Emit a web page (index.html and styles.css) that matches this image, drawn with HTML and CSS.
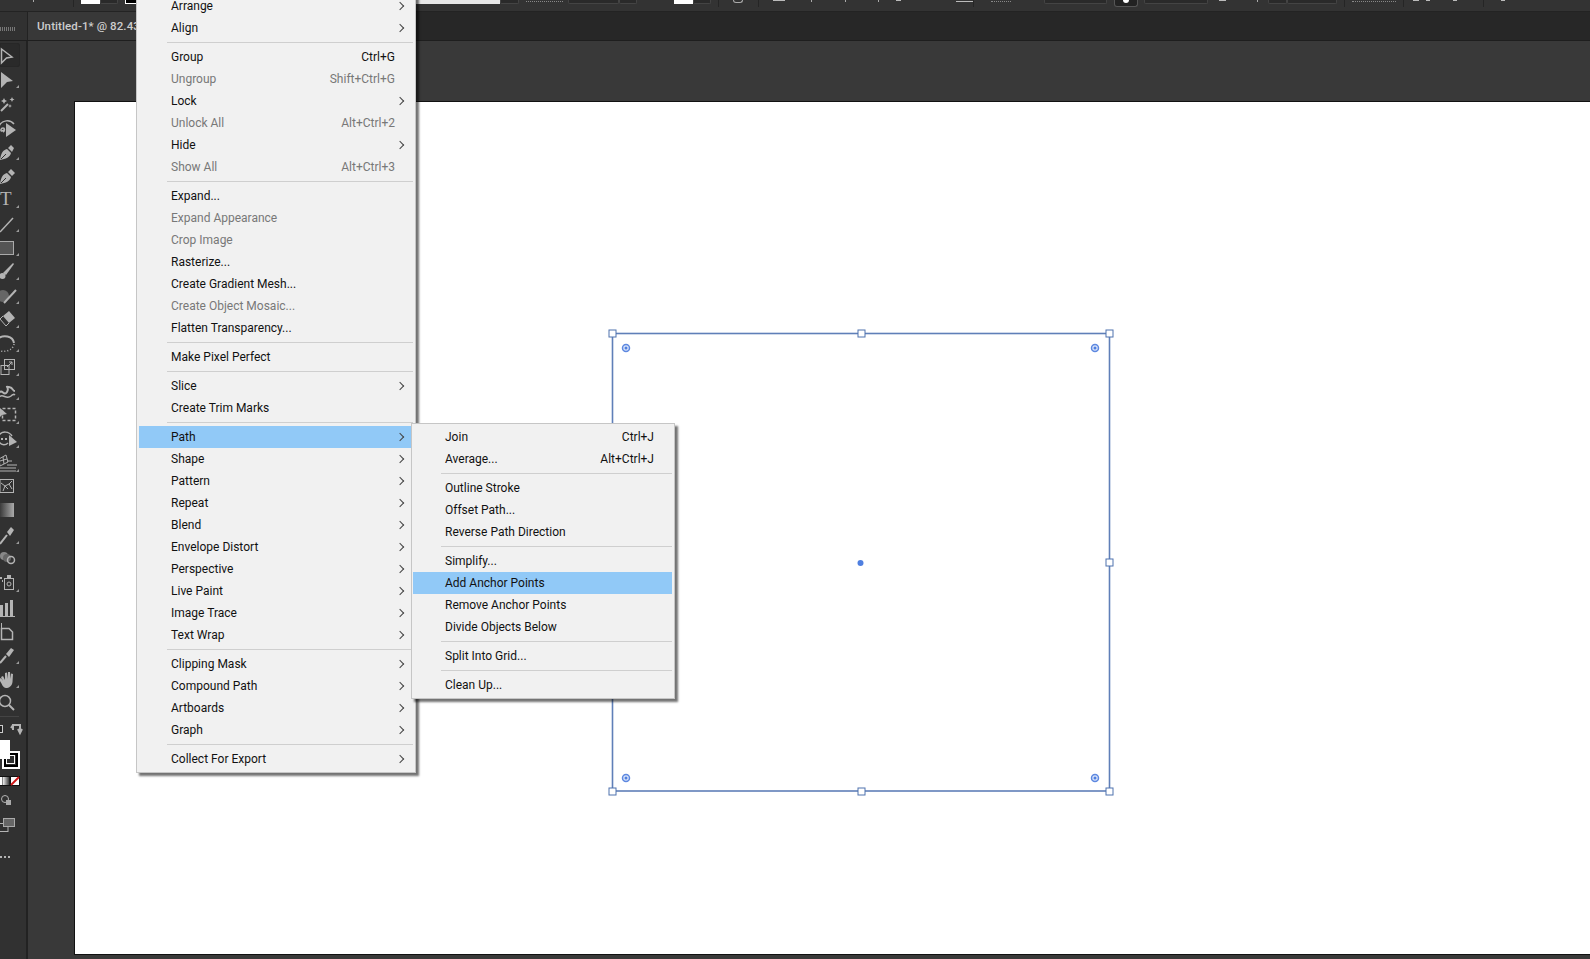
FILE: index.html
```html
<!DOCTYPE html>
<html lang="en">
<head>
  <meta charset="UTF-8">
  <title>Untitled-1* @ 82.43%</title>
  <link rel="stylesheet" href="styles.css">
</head>
<body>

  <!-- Control bar, only its lower edge is on screen -->
  <div class="control-bar">
    <i class="tick m33"></i><i class="sep m39"></i>
    <i class="white m7 w19"></i><i class="dd w18"></i>
    <i class="stroke-box m7 w13"></i>
    <i class="light m277 w85"></i><i class="dd w19"></i>
    <i class="dots m7 w37"></i>
    <i class="dd m5 w51"></i><i class="dd w18"></i>
    <i class="white m37 w19"></i><i class="dd w18"></i>
    <i class="sep m7"></i>
    <i class="knob m14"></i>
    <i class="sep m15"></i>
    <i class="bar m14 w12"></i>
    <i class="tick m26"></i><i class="tick m33"></i><i class="tick m32"></i>
    <i class="bar m17 w5"></i>
    <i class="line m55 w17"></i>
    <i class="sep"></i>
    <i class="dots m17 w20"></i>
    <i class="dd m33 w63"></i>
    <i class="toggle m7 w24"></i>
    <i class="dd m6 w64"></i>
    <i class="bar m11 w7"></i>
    <i class="tick m31"></i>
    <i class="dd m10 w19"></i><i class="dd w50"></i>
    <i class="sep m7"></i>
    <i class="dots m7 w44"></i>
    <i class="sep m7"></i>
    <i class="bar m9 w6"></i><i class="bar m7 w4"></i><i class="bar m23 w4"></i>
    <i class="sep m26"></i>
    <i class="bar m17 w4"></i>
  </div>

  <div class="tab-bar">
    <div class="gripper-cell"><i class="gripper"></i></div>
    <div class="doc-tab"><span class="doc-name">Untitled-1* @ 82.43</span></div>
  </div>

  <div class="workspace">

    <!-- Tools -->
    <div class="toolbar">
      <div class="tool selected"><svg viewBox="0 0 28 24"><path class="ln w15" d="M1.500 6 12 14 6.500 15 1.500 20Z"/></svg></div>
      <div class="tool"><svg viewBox="0 0 28 24"><path class="fl" d="M1 5 13 14 7 15 1 21Z"/><path class="fly" d="M19 18v3h-3Z"/></svg></div>
      <div class="tool"><svg viewBox="0 0 28 24"><path class="ln w2" d="M1 20 8 13"/><path class="fl" d="M4 7l1 2 2 1-2 1-1 2-1-2-2-1 2-1ZM12 6l.8 1.700 1.700.8-1.700.8-.8 1.700-.8-1.700-1.700-.8 1.700-.8ZM10 13l.6 1.400 1.400.6-1.400.6-.6 1.400-.6-1.400-1.400-.6 1.400-.6Z"/></svg></div>
      <div class="tool"><svg viewBox="0 0 28 24"><path class="ln w15" d="M-1 11C2 5 10 4 14 9"/><path class="fl" d="M6 8 16 15 6 22Z"/><path class="ln w15" d="M3 17c2-1 2-4 0-4s-3 3-1 3l2-1"/></svg></div>
      <div class="tool"><svg viewBox="0 0 28 24"><path class="fl" d="M0 21C1 14 3 11 7 10L11 14C10 18 6 20 0 21ZM8 9 11 6 14 9 12 13Z"/><path class="dk" d="M1 20 6 15"/><path class="fly" d="M19 18v3h-3Z"/></svg></div>
      <div class="tool"><svg viewBox="0 0 28 24"><path class="fl" d="M0 21C1 14 3 11 7 10L11 14C10 18 6 20 0 21ZM8 9 11 6 15 10 12 13Z"/><path class="dk" d="M1 20 6 15"/></svg></div>
      <div class="tool"><svg viewBox="0 0 28 24"><text class="type-glyph" x="0" y="18">T</text><path class="fly" d="M19 18v3h-3Z"/></svg></div>
      <div class="tool"><svg viewBox="0 0 28 24"><path class="ln w15" d="M0 21 13 7"/><path class="fly" d="M19 18v3h-3Z"/></svg></div>
      <div class="tool"><svg viewBox="0 0 28 24"><rect x="-2" y="6.500" width="15.500" height="13" fill="#555" stroke="#aaa"/><path class="fly" d="M19 18v3h-3Z"/></svg></div>
      <div class="tool"><svg viewBox="0 0 28 24"><path class="fl" d="M13 4 14 5 6 16 3 14Z"/><circle class="fl" cx="2.500" cy="17" r="3"/><path class="fly" d="M19 18v3h-3Z"/></svg></div>
      <div class="tool"><svg viewBox="0 0 28 24"><circle cx="3" cy="13" r="6" fill="#666"/><path class="ln w2" d="M4 20 16 7"/><path class="fly" d="M19 18v3h-3Z"/></svg></div>
      <div class="tool"><svg viewBox="0 0 28 24"><path class="fl" d="M9 4 15 11 9 16 3 9Z"/><path class="ln" d="M3 9 0 12 6 19 9 16"/><path class="fly" d="M19 18v3h-3Z"/></svg></div>
      <div class="tool"><svg viewBox="0 0 28 24"><path class="ln w2" d="M-2 8C3 3 13 5 14 12"/><path class="ln dotted w15" d="M14 13C13 20 3 22-2 19"/><path class="fly" d="M19 18v3h-3Z"/></svg></div>
      <div class="tool"><svg viewBox="0 0 28 24"><rect class="ln" x="1" y="10.500" width="8" height="9"/><rect class="ln" x="4.500" y="4.500" width="10" height="10"/><path class="ln" d="M7 12 12 7M9 7h3v3"/><path class="fly" d="M19 18v3h-3Z"/></svg></div>
      <div class="tool"><svg viewBox="0 0 28 24"><path class="ln w2" d="M-1 14C2 9 4 18 7 13S4 7 9 8 12 12 15 12"/><path class="ln w15" d="M-1 18C3 14 6 21 11 17 13 15 14 15 15 16"/><path class="fly" d="M19 18v3h-3Z"/></svg></div>
      <div class="tool"><svg viewBox="0 0 28 24"><rect class="ln dashed w15" x="2.500" y="5.500" width="13" height="12"/><path class="fl" d="M0 5 7 11 2 12 0 14Z"/><path class="fly" d="M19 18v3h-3Z"/></svg></div>
      <div class="tool"><svg viewBox="0 0 28 24"><path class="ln w15" d="M-1 8C2 4 9 4 12 9"/><path class="ln w15" d="M-1 15C2 19 6 18 8 16"/><path class="dotrow" d="M1 12h8"/><path class="fl" d="M9 8 17 15 9 19Z"/><path class="fly" d="M19 18v3h-3Z"/></svg></div>
      <div class="tool"><svg viewBox="0 0 28 24"><path class="ln" d="M-1 8 6 4 8 11 0 15ZM3 6 4 13M0 10 7 8"/><path class="ln" d="M7 10h5M7 14h10M0 17h16M0 20h16"/><path class="fly" d="M19 18v3h-3Z"/></svg></div>
      <div class="tool"><svg viewBox="0 0 28 24"><rect class="ln" x="0" y="4.500" width="13.500" height="13"/><path class="ln" d="M1 8 5 11 3 16M5 11 9 9 12 6M9 9 12 14M5 11 8 14"/></svg></div>
      <div class="tool"><svg viewBox="0 0 28 24"><rect x="-1" y="4" width="15" height="14" fill="url(#grad-tool)"/></svg></div>
      <div class="tool"><svg viewBox="0 0 28 24"><path class="ln w2" d="M0 21 7 12"/><path class="fl" d="M7 9 11 4 14 7 10 13Z"/><path class="fly" d="M19 18v3h-3Z"/></svg></div>
      <div class="tool"><svg viewBox="0 0 28 24"><circle cx="4" cy="9" r="4" fill="#888"/><circle cx="7" cy="11" r="4" fill="#666"/><circle class="ln w15" cx="11" cy="13" r="3.500"/></svg></div>
      <div class="tool"><svg viewBox="0 0 28 24"><rect class="ln" x="4.500" y="7.500" width="9" height="11"/><circle class="ln" cx="9" cy="13" r="2"/><rect class="fl" x="7" y="4" width="4" height="3"/><path class="dotrow" d="M0 7h3M2 10h1"/><path class="fly" d="M19 18v3h-3Z"/></svg></div>
      <div class="tool"><svg viewBox="0 0 28 24"><path class="fl" d="M0 10H3V21H0ZM5 8H8V21H5ZM10 5H13V21H10Z"/><path class="fl" d="M-1 21H15V22H-1Z"/></svg></div>
      <div class="tool"><svg viewBox="0 0 28 24"><path class="ln w15" d="M1.500 9.500H9L12.500 13V20.500H1.500Z"/><path class="ln" d="M1.500 4V9"/></svg></div>
      <div class="tool"><svg viewBox="0 0 28 24"><path class="ln w2" d="M0 20 6 13"/><path class="fl" d="M6 11 11 5 14 7 9 14Z"/><path class="fly" d="M19 18v3h-3Z"/></svg></div>
      <div class="tool"><svg viewBox="0 0 28 24"><path class="fl" d="M1 10 3 9 5 13V6L7 5.500 8 12V5L10 5 10.500 12 11 6.500 13 7 12.500 15C12 19 9 21 6 21 3 21 2 17 0 14L-1 12 1 11 3 14Z"/><path class="fly" d="M19 18v3h-3Z"/></svg></div>
      <div class="tool"><svg viewBox="0 0 28 24"><circle class="ln w15" cx="5" cy="10" r="5.500"/><path class="ln w2" d="M9 14 14 19"/></svg></div>
    </div>

    <div class="tool-extras">
      <svg viewBox="0 0 28 150" class="swatches">
        <path d="M0 1.500H19" class="rule"/>
        <rect x="-3" y="10.500" width="5.500" height="7" fill="#222" stroke="#ccc"/>
        <path class="ln w2" d="M13 15V10H20V16M11 13 13 10M22 14 20 18 18 14" />
        <rect x="3" y="37" width="16" height="16" fill="none" stroke="#fff" stroke-width="2"/>
        <rect x="5" y="39" width="12" height="12" fill="none" stroke="#000" stroke-width="2"/>
        <rect x="6.500" y="40.500" width="8" height="8" fill="none" stroke="#fff"/>
        <rect x="-1" y="25" width="11" height="19" fill="#fff"/>
        <rect x="-1" y="61" width="21" height="10" fill="#111"/>
        <rect x="0" y="62" width="2.500" height="8" fill="#fff"/>
        <rect x="3" y="62" width="6.500" height="8" fill="url(#grad-swatch)"/>
        <rect x="11" y="62" width="8" height="8" fill="#fff"/>
        <path d="M11 70 19 62" stroke="#d01818" stroke-width="2"/>
        <circle class="ln" cx="5" cy="84" r="3.500"/>
        <rect x="6" y="85" width="5" height="5" fill="#aaa"/>
        <rect class="ln" x="-2" y="108.500" width="10" height="8"/>
        <rect x="3.500" y="103.500" width="11" height="8" fill="#666" stroke="#aaa"/>
        <path class="dotrow" d="M0 142h12"/>
        <defs>
          <linearGradient id="grad-tool"><stop offset="0" stop-color="#333"/><stop offset="1" stop-color="#aaa"/></linearGradient>
          <linearGradient id="grad-swatch"><stop offset="0" stop-color="#eee"/><stop offset="1" stop-color="#333"/></linearGradient>
        </defs>
      </svg>
    </div>

    <div class="canvas">
      <div class="artboard">
        <svg class="selection" width="520" height="484" viewBox="0 0 520 484">
          <rect class="sel-box" x="12.500" y="13.500" width="497" height="457.500"/>
          <g class="sel-handles">
            <rect x="9" y="10" width="7" height="7"/><rect x="258" y="10" width="7" height="7"/><rect x="506" y="10" width="7" height="7"/>
            <rect x="9" y="239" width="7" height="7"/><rect x="506" y="239" width="7" height="7"/>
            <rect x="9" y="468" width="7" height="7"/><rect x="258" y="468" width="7" height="7"/><rect x="506" y="468" width="7" height="7"/>
          </g>
          <g class="sel-corners">
            <circle cx="26" cy="28" r="3.500"/><circle cx="495" cy="28" r="3.500"/><circle cx="26" cy="458" r="3.500"/><circle cx="495" cy="458" r="3.500"/>
          </g>
          <g class="sel-dots">
            <circle cx="26" cy="28" r="1.500"/><circle cx="495" cy="28" r="1.500"/><circle cx="26" cy="458" r="1.500"/><circle cx="495" cy="458" r="1.500"/>
            <circle cx="260.500" cy="243" r="3"/>
          </g>
        </svg>
      </div>
    </div>
  </div>

  <!-- Object menu -->
  <div class="menu main-menu">
    <div class="item"><span>Arrange</span><b class="arrow"></b></div>
    <div class="item"><span>Align</span><b class="arrow"></b></div>
    <hr>
    <div class="item"><span>Group</span><em>Ctrl+G</em></div>
    <div class="item off"><span>Ungroup</span><em>Shift+Ctrl+G</em></div>
    <div class="item"><span>Lock</span><b class="arrow"></b></div>
    <div class="item off"><span>Unlock All</span><em>Alt+Ctrl+2</em></div>
    <div class="item"><span>Hide</span><b class="arrow"></b></div>
    <div class="item off"><span>Show All</span><em>Alt+Ctrl+3</em></div>
    <hr>
    <div class="item"><span>Expand...</span></div>
    <div class="item off"><span>Expand Appearance</span></div>
    <div class="item off"><span>Crop Image</span></div>
    <div class="item"><span>Rasterize...</span></div>
    <div class="item"><span>Create Gradient Mesh...</span></div>
    <div class="item off"><span>Create Object Mosaic...</span></div>
    <div class="item"><span>Flatten Transparency...</span></div>
    <hr>
    <div class="item"><span>Make Pixel Perfect</span></div>
    <hr>
    <div class="item"><span>Slice</span><b class="arrow"></b></div>
    <div class="item"><span>Create Trim Marks</span></div>
    <hr>
    <div class="item active"><span>Path</span><b class="arrow"></b></div>
    <div class="item"><span>Shape</span><b class="arrow"></b></div>
    <div class="item"><span>Pattern</span><b class="arrow"></b></div>
    <div class="item"><span>Repeat</span><b class="arrow"></b></div>
    <div class="item"><span>Blend</span><b class="arrow"></b></div>
    <div class="item"><span>Envelope Distort</span><b class="arrow"></b></div>
    <div class="item"><span>Perspective</span><b class="arrow"></b></div>
    <div class="item"><span>Live Paint</span><b class="arrow"></b></div>
    <div class="item"><span>Image Trace</span><b class="arrow"></b></div>
    <div class="item"><span>Text Wrap</span><b class="arrow"></b></div>
    <hr>
    <div class="item"><span>Clipping Mask</span><b class="arrow"></b></div>
    <div class="item"><span>Compound Path</span><b class="arrow"></b></div>
    <div class="item"><span>Artboards</span><b class="arrow"></b></div>
    <div class="item"><span>Graph</span><b class="arrow"></b></div>
    <hr>
    <div class="item"><span>Collect For Export</span><b class="arrow"></b></div>
  </div>

  <!-- Path submenu -->
  <div class="menu sub-menu">
    <div class="item"><span>Join</span><em>Ctrl+J</em></div>
    <div class="item"><span>Average...</span><em>Alt+Ctrl+J</em></div>
    <hr>
    <div class="item"><span>Outline Stroke</span></div>
    <div class="item"><span>Offset Path...</span></div>
    <div class="item"><span>Reverse Path Direction</span></div>
    <hr>
    <div class="item"><span>Simplify...</span></div>
    <div class="item active"><span>Add Anchor Points</span></div>
    <div class="item"><span>Remove Anchor Points</span></div>
    <div class="item"><span>Divide Objects Below</span></div>
    <hr>
    <div class="item"><span>Split Into Grid...</span></div>
    <hr>
    <div class="item"><span>Clean Up...</span></div>
  </div>

</body>
</html>
```

FILE: styles.css
```css
html, body {
  height: 100%;
}

body {
  margin: 0;
  overflow: hidden;
  background: #393939;
  font-family: Roboto, "Noto Sans", sans-serif;
  display: flex;
  flex-direction: column;
}

/* Control bar */
.control-bar {
  height: 11px;
  display: flex;
  align-items: flex-start;
  flex: none;
  background: #333;
  border-bottom: 1px solid #232323;
}

.control-bar i {
  display: block;
  flex: none;
}

.tick { width: 1px; height: 2px; background: #aaa; }
.sep { width: 1px; height: 7px; background: #252525; }
.white { height: 4px; background: #fff; }
.light { height: 4px; background: #e8e8e8; }
.dd { height: 4px; background: #2a2a2a; border: 1px solid #444; border-top: 0; box-sizing: border-box; border-radius: 0 0 2px 2px; }
.stroke-box { height: 4px; background: #000; border: 1px solid #fff; border-top: 0; box-sizing: border-box; }
.dots { height: 1px; border-bottom: 1px dotted #888; }
.knob { width: 8px; height: 2px; border: 1px solid #aaa; border-top: 0; border-radius: 0 0 5px 5px; }
.bar { height: 1px; background: #bbb; }
.line { height: 1px; margin-top: 1px; background: #bbb; }

.control-bar .toggle {
  height: 7px;
  display: flex;
  justify-content: center;
  background: #222;
  border: 1px solid #555;
  border-top: 0;
  box-sizing: border-box;
  border-radius: 0 0 3px 3px;
}

.toggle::after {
  content: "";
  width: 6px;
  height: 3px;
  background: #fff;
  border-radius: 0 0 3px 3px;
}

.m5 { margin-left: 5px; }
.m6 { margin-left: 6px; }
.m7 { margin-left: 7px; }
.m9 { margin-left: 9px; }
.m10 { margin-left: 10px; }
.m11 { margin-left: 11px; }
.m14 { margin-left: 14px; }
.m15 { margin-left: 15px; }
.m17 { margin-left: 17px; }
.m23 { margin-left: 23px; }
.m26 { margin-left: 26px; }
.m31 { margin-left: 31px; }
.m32 { margin-left: 32px; }
.m33 { margin-left: 33px; }
.m37 { margin-left: 37px; }
.m39 { margin-left: 39px; }
.m55 { margin-left: 55px; }
.m277 { margin-left: 277px; }

.w4 { width: 4px; }
.w5 { width: 5px; }
.w6 { width: 6px; }
.w7 { width: 7px; }
.w12 { width: 12px; }
.w13 { width: 13px; }
.w17 { width: 17px; }
.w18 { width: 18px; }
.w19 { width: 19px; }
.w20 { width: 20px; }
.w24 { width: 24px; }
.w37 { width: 37px; }
.w44 { width: 44px; }
.w50 { width: 50px; }
.w51 { width: 51px; }
.w63 { width: 63px; }
.w64 { width: 64px; }
.w85 { width: 85px; }

/* Document tabs */
.tab-bar {
  height: 28px;
  display: flex;
  flex: none;
  background: #272727;
  border-bottom: 1px solid #1e1e1e;
}

.gripper-cell {
  width: 28px;
  background: #313131;
  border-right: 1px solid #222;
  box-sizing: border-box;
  display: flex;
  align-items: flex-end;
}

.gripper {
  display: block;
  width: 15px;
  height: 4px;
  margin-bottom: 9px;
  background: repeating-linear-gradient(90deg, #777 0 1px, transparent 1px 2px);
}

.doc-tab {
  width: 140px;
  padding-left: 9px;
  line-height: 29px;
  box-sizing: border-box;
  background: #383838;
}

.doc-name {
  display: block;
  width: 100px;
  font-size: 11.5px;
  font-weight: 500;
  letter-spacing: 0.1px;
  white-space: nowrap;
  color: #cdcdcd;
}

/* Left tools */
.workspace {
  flex: 1;
  position: relative;
  display: flex;
  min-height: 0;
}

.toolbar {
  position: relative;
  width: 28px;
  flex: none;
  box-sizing: border-box;
  padding-top: 2px;
  background: #313131;
  border-right: 2px solid #222;
}

.tool {
  height: 24px;
}

.tool svg {
  display: block;
  width: 28px;
  height: 24px;
  overflow: visible;
}

.tool.selected {
  width: 20px;
  background: #2a2a2a;
  border-radius: 0 3px 3px 0;
  box-shadow: inset 0 0 0 1px #272727;
}

.tool-extras {
  position: absolute;
  left: 0;
  top: 674px;
  width: 26px;
}

.swatches {
  display: block;
  width: 28px;
  height: 150px;
  overflow: visible;
}

.ln { fill: none; stroke: #b4b4b4; stroke-width: 1; }
.w15 { stroke-width: 1.5; }
.w2 { stroke-width: 2; }
.fl { fill: #b4b4b4; }
.dk { fill: none; stroke: #313131; stroke-width: 1; }
.fly { fill: #9a9a9a; }
.dotted { stroke-dasharray: 1 2; }
.dashed { stroke-dasharray: 3 2; }
.dotrow { fill: none; stroke: #b4b4b4; stroke-width: 2; stroke-dasharray: 2 2; }
.rule { stroke: #444; stroke-width: 1; }

.type-glyph {
  font-family: "Liberation Serif", serif;
  font-size: 19px;
  fill: #b4b4b4;
}

/* Canvas and selected square */
.canvas {
  flex: 1;
  min-width: 0;
  background: #393939;
}

.artboard {
  position: relative;
  margin: 60px 0 0 46px;
  height: 852px;
  background: #fff;
  border: 1px solid #111;
  border-right: 0;
}

.selection {
  position: absolute;
  left: 525px;
  top: 218px;
  overflow: visible;
}

.sel-box { fill: none; stroke: #5f7fb8; stroke-width: 1.6; }
.sel-handles rect { fill: #fff; stroke: #4f72ae; stroke-width: 1; }
.sel-corners circle { fill: #dbe5fa; stroke: #5d88e0; stroke-width: 1.5; }
.sel-dots circle { fill: #4f7fe0; }

/* Menus */
.menu {
  position: absolute;
  box-sizing: border-box;
  padding: 2px 2px 2px 1px;
  background: #f1f1f1;
  border: 1px solid #c6c6c6;
  box-shadow: 3px 3px 2px rgba(0, 0, 0, 0.55);
  font-size: 12px;
  color: #111;
}

.main-menu {
  left: 136px;
  top: -8px;
  width: 280px;
  padding-left: 2px;
  z-index: 1;
}

.sub-menu {
  left: 411px;
  top: 423px;
  width: 264px;
  z-index: 2;
}

.item {
  height: 22px;
  display: flex;
  align-items: center;
  padding: 0 18px 0 32px;
  line-height: 22px;
  white-space: nowrap;
}

.item span {
  flex: 1;
}

.item em {
  font-style: normal;
}

.item.off {
  color: #787878;
}

.item.active {
  background: #91c9f7;
}

.arrow {
  width: 5px;
  height: 5px;
  margin-right: -8px;
  border-top: 1px solid #444;
  border-right: 1px solid #444;
  transform: rotate(45deg);
}

.menu hr {
  height: 1px;
  margin: 3px 0 3px 28px;
  border: 0;
  background: #cfcfcf;
}
```
